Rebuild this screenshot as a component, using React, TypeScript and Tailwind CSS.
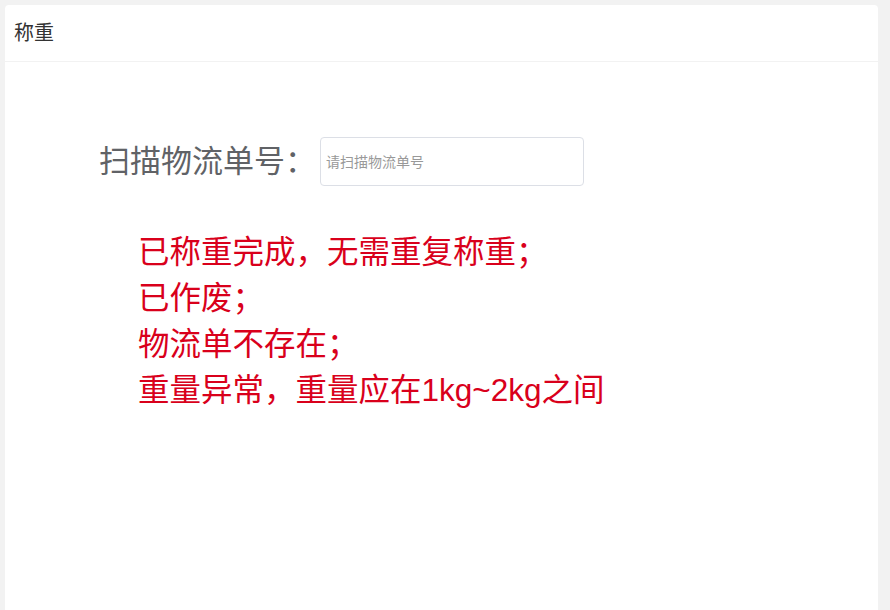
import { useState } from "react";

const errors = [
  "已称重完成，无需重复称重；",
  "已作废；",
  "物流单不存在；",
  "重量异常，重量应在1kg~2kg之间",
];

const font = "font-['Liberation_Sans','Noto_Sans_CJK_SC',sans-serif]";

export default function App() {
  const [code, setCode] = useState("");

  return (
    <div className={`min-h-screen bg-[#f2f2f2] pl-[5px] pr-[12px] pt-[5px] ${font}`}>
      {/* Header */}
      <div className="flex h-[56px] items-center rounded-t-[4px] bg-white px-[9px] text-[20px] text-[#333]">
        称重
      </div>

      {/* Body */}
      <div className="mt-px h-[549px] bg-white pl-[94px] pt-[75px]">
        <div className="flex items-center">
          <span className="text-[31px] leading-none text-[#606266]">扫描物流单号：</span>
          <input
            value={code}
            onChange={(e) => setCode(e.target.value)}
            placeholder="请扫描物流单号"
            className="ml-[4px] h-[49px] w-[264px] rounded-[4px] border border-[#dcdfe6] px-[5px] text-[14px] text-[#606266] outline-none placeholder:text-[#999]"
          />
        </div>

        <div className="ml-[39px] mt-[43px] text-[31.5px] leading-[46px] text-[#d9001b]">
          {errors.map((e) => (
            <div key={e}>{e}</div>
          ))}
        </div>
      </div>
    </div>
  );
}
